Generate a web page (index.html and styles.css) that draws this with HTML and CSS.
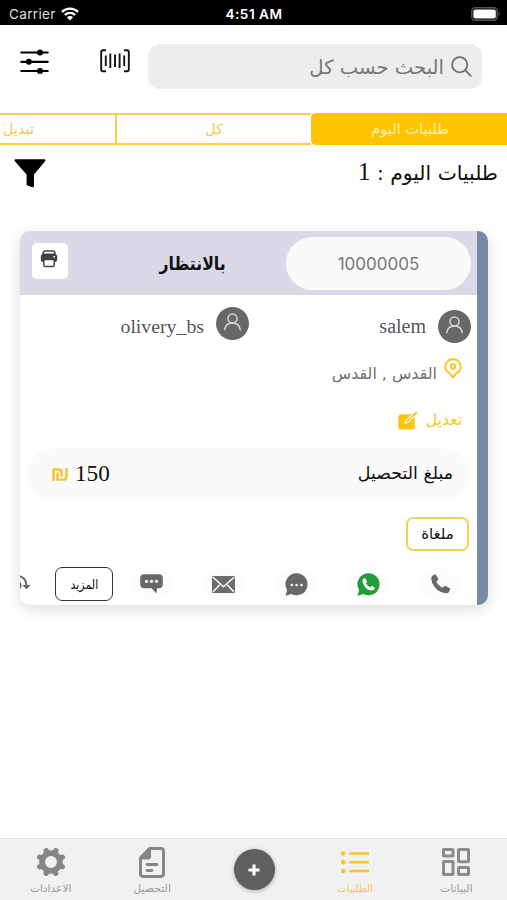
FILE: index.html
```html
<!DOCTYPE html>
<html lang="ar" dir="rtl">
<head>
<meta charset="utf-8">
<title>طلبيات اليوم</title>
<link rel="stylesheet" href="styles.css">
</head>
<body>
<div class="status" dir="ltr">
  <div class="carrier"><span>Carrier</span>
    <svg width="18" height="14" viewBox="0 0 18 14"><g fill="none" stroke="#fff" stroke-width="2.3"><path d="M.9 4.9a11.6 11.6 0 0 1 16.2 0"/><path d="M3.8 8a7.4 7.4 0 0 1 10.4 0"/></g><path d="M5.9 10.2a4.4 4.4 0 0 1 6.2 0L9 13.4z" fill="#fff"/></svg>
  </div>
  <div class="clock">4:51 AM</div>
  <div class="battery"><svg width="30" height="14" viewBox="0 0 30 14"><rect x=".8" y=".8" width="25.4" height="12.4" rx="3.4" fill="none" stroke="#555" stroke-width="1.5"/><rect x="2.4" y="2.4" width="22.4" height="9.2" rx="2" fill="#fff"/><path d="M27.6 4.8q2 2.2 0 4.4z" fill="#666"/></svg></div>
</div>

<header class="top">
  <div class="search">
    <svg width="21" height="21" viewBox="0 0 21 21" fill="none" stroke="#6d6d6d" stroke-width="1.8" stroke-linecap="round"><circle cx="8.7" cy="8.7" r="7.6"/><path d="m14.3 14.3 5.5 5.5"/></svg>
    <span class="t t-search">البحث حسب كل</span>
  </div>
  <svg class="barcode" width="30" height="24" viewBox="0 0 30 24" fill="none" stroke="#111" stroke-width="1.9"><path d="M6 1.2H3Q1.2 1.2 1.2 3V20.500q0 1.8 1.800 1.800H6M24 1.200h3q1.800 0 1.800 1.800V20.500q0 1.800-1.800 1.800H24M5.800 6.500v10.500M10.300 4.500v14.500M15 5.500v12.500M19.600 4.500v14.500M24.200 6.500v10.500"/></svg>
  <svg class="sliders" width="29" height="25" viewBox="0 0 29 25" stroke="#000" stroke-width="2.2" stroke-linecap="round"><path d="M1.300 3.500h26.400M1.300 12.800h26.400M1.300 22h26.400"/><g stroke="none"><circle cx="20" cy="3.500" r="3"/><circle cx="8.800" cy="12.800" r="3"/><circle cx="20" cy="22" r="3"/></g></svg>
</header>

<nav class="segments">
  <div class="seg active"><span class="t">طلبيات اليوم</span></div>
  <div class="seg"><span class="t">كل</span></div>
  <div class="seg last"><span class="t">تبديل</span></div>
</nav>

<div class="heading">
  <h1 class="t">طلبيات اليوم : <span class="serif">1</span></h1>
  <svg width="32" height="29" viewBox="0 0 32 29"><path d="M1.500 .3h29q1.300 0 .8 1.500l-.8 1.300L20 15.500V26.700q0 2-1.800 1.500l-4.800-1.600q-.8-.3-.8-1.100V15.500L1.500 3.100.5 1.800Q0 .3 1.500.3z"/></svg>
</div>

<article class="card">
  <div class="card-head">
    <div class="order">10000005</div>
    <div class="state"><span class="t">بالانتظار</span></div>
    <div class="print"><svg width="18" height="18" viewBox="0 0 18 18"><path d="M4.700 1h8.600q1 0 1.300 1l.5 2.300H2.900L3.400 2q.3-1 1.300-1z" fill="none" stroke="#453f44" stroke-width="1.500"/><path d="M2.600 4.600h12.800q1.800 0 1.800 1.800v3.700q0 1.800-1.800 1.800H2.600Q.8 11.900.8 10.100V6.400q0-1.800 1.800-1.800z" fill="#453f44"/><path d="M3.800 9.400h10.400v5.600q0 1.600-1.600 1.600H5.400q-1.600 0-1.600-1.600z" fill="#fff" stroke="#453f44" stroke-width="1.500"/><circle cx="14.200" cy="6.700" r=".9" fill="#fff"/></svg></div>
  </div>
  <div class="people">
    <div class="person first"><svg class="avatar" width="33" height="33" viewBox="0 0 33 33"><circle cx="16.500" cy="16.500" r="16.500" fill="#686868"/><g fill="none" stroke="#d6d6d6" stroke-width="1.500" stroke-linecap="round"><circle cx="16.500" cy="11.500" r="4.500"/><path d="M8.700 22.700q1-6.700 7.800-6.700t7.800 6.700"/></g></svg><span class="name" dir="ltr">salem</span></div>
    <div class="person second"><svg class="avatar" width="33" height="33" viewBox="0 0 33 33"><circle cx="16.500" cy="16.500" r="16.500" fill="#686868"/><g fill="none" stroke="#d6d6d6" stroke-width="1.500" stroke-linecap="round"><circle cx="16.500" cy="11.500" r="4.500"/><path d="M8.700 22.700q1-6.700 7.800-6.700t7.800 6.700"/></g></svg><span class="name" dir="ltr">olivery_bs</span></div>
  </div>
  <div class="place">
    <svg width="18" height="21" viewBox="0 0 18 21" fill="none" stroke="#fbc517" stroke-width="1.900"><path d="M9 19.300 5.700 15.400Q1.200 12.600 1.200 8.700a7.800 7.500 0 0 1 15.600 0q0 3.900-4.500 6.700z"/><circle cx="9" cy="8.500" r="2.200"/></svg>
    <span class="t">القدس , القدس</span>
  </div>
  <div class="edit">
    <span class="t">تعديل</span>
    <svg width="20" height="19" viewBox="0 0 20 19"><rect x=".3" y="3.300" width="16.400" height="15.200" rx="2.300" fill="#fdc40a"/><path d="m7 12.300 1-3L17.300 1l1.500 1.400-8.500 8.700z" fill="#fdc40a" stroke="#fff" stroke-width="1.200"/><path d="m14 4 4.400-3.600 1.300 1.200-3.900 4z" fill="#fdc40a"/></svg>
  </div>
  <div class="amount">
    <span class="t">مبلغ التحصيل</span>
    <div class="sum" dir="ltr"><svg width="16" height="13" viewBox="0 0 17 14" fill="none" stroke="#efc62d" stroke-width="2.600"><path d="M1.500 14V1.500H7q3.200 0 3.200 3V9.500M5.800 4.800v7.700H12q3.500 0 3.500-3.300V0"/></svg><span>150</span></div>
  </div>
  <div class="tags"><span class="tag"><span class="t">ملغاة</span></span></div>
  <div class="actions">
    <div class="act"><i class="halo"><svg width="20" height="20" viewBox="0 0 20 20"><path d="M1.200 1.900 3.500.6q1-.5 1.600.5l2 3.500q.5 1-.4 1.700L5.300 7.500q1.700 4 6.300 6.300l1.500-1.500q.8-.8 1.700-.3l3.900 2.200q.9.600.4 1.600l-1.300 2.500q-.6 1.100-2 1Q8 18.800 3.600 13 .3 8.600.2 4q0-1.400 1-2.100z" fill="#686868"/></svg></i></div>
    <div class="act"><i class="halo"><svg width="23" height="23" viewBox="0 0 23 23"><path d="M11.700.3A11 11 0 1 1 6.400 21L.5 22.700 2.100 17A11 11 0 0 1 11.700.3z" fill="#219e3a"/><path d="m5.700 6.500 1.500-1.200q.6-.4 1.100.2l1.600 2.700q.3.600-.2 1.100l-.8.900q1.500 2.700 4.300 4l1.200-1q.6-.4 1.200 0l2 1.400q.6.500.2 1.100-1.300 2-3.300 1.800-7.300-.8-9-9-.1-1.200.2-2z" fill="#fff"/></svg></i></div>
    <div class="act"><i class="halo"><svg width="23" height="23" viewBox="0 0 23 23"><path d="M11.700.3A11 11 0 1 1 6.400 21L.5 22.700 2.100 17A11 11 0 0 1 11.700.3z" fill="#686868"/><g fill="#fff"><circle cx="6.800" cy="12" r="1.300"/><circle cx="11.600" cy="12" r="1.300"/><circle cx="16.400" cy="12" r="1.300"/></g></svg></i></div>
    <div class="act"><i class="halo"><svg width="23" height="17" viewBox="0 0 23 17"><rect width="23" height="17" rx="1.500" fill="#6c6c6c"/><path d="m1 1.300 10.500 9.400L22 1.300M1.200 15.700l6.600-7M21.800 15.700l-6.600-7" fill="none" stroke="#fff" stroke-width="1.400"/></svg></i></div>
    <div class="act"><i class="halo"><svg width="23" height="20" viewBox="0 0 23 20"><path d="M4.200.2h14.600q4 0 4 4v6q0 4-4 4H17l-.5 5.300-5-5.300H4.200q-4 0-4-4v-6q0-4 4-4z" fill="#686868"/><g fill="#fff"><circle cx="6.500" cy="7.300" r="1.600"/><circle cx="11.500" cy="7.300" r="1.600"/><circle cx="16.500" cy="7.300" r="1.600"/></g></svg></i></div>
    <div class="more"><span class="t">المزيد</span></div>
    <div class="swap"><svg width="12" height="20" viewBox="0 0 12 20" fill="none" stroke="#686868" stroke-width="2"><path d="M0 2Q7.500 3.500 7.500 12.500"/><path d="m3.500 11 4 4.500 4-4.500z" fill="#686868" stroke="none"/><path d="M0 7.500q3.500 4-.5 8"/></svg></div>
  </div>
</article>

<footer class="tabs">
  <div class="tab"><svg width="28" height="28" viewBox="0 0 28 28" fill="none" stroke="#8b8b8b" stroke-width="3"><rect x="1.500" y="1.500" width="9.500" height="6.500" rx=".5"/><rect x="16.500" y="1.500" width="10" height="12.300" rx=".5"/><rect x="1.500" y="13.500" width="9.500" height="13" rx=".5"/><rect x="16.500" y="19.500" width="10" height="7" rx=".5"/></svg><span class="t n1">البيانات</span></div>
  <div class="tab on"><svg width="28" height="28" viewBox="0 0 28 28" fill="none" stroke="#f5c525" stroke-width="2.600" stroke-linecap="round"><path d="M9.500 5.500h17.500M9.500 14.300h17.500M9.500 23h17.500"/><g fill="#f5c525" stroke="none"><circle cx="2.200" cy="5.500" r="2.200"/><circle cx="2.200" cy="14.300" r="2.200"/><circle cx="2.200" cy="23" r="2.200"/></g></svg><span class="t n2">الطلبيات</span></div>
  <div class="tab"><div class="add"><svg width="12" height="12" viewBox="0 0 12 12" stroke="#fff" stroke-width="3"><path d="M6 .5v11M.5 6h11"/></svg></div></div>
  <div class="tab"><svg class="doc" width="26" height="31" viewBox="0 0 26 30" preserveAspectRatio="none" fill="none" stroke="#858585" stroke-width="2.900" stroke-linejoin="round" stroke-linecap="round"><path d="M10.500 1.500H22q2.500 0 2.500 2.500v22q0 2.500-2.500 2.500H4q-2.500 0-2.500-2.500V10.500z"/><path d="M1.500 11.500 11.500 1.500V9q0 2.500-2.500 2.500z" fill="#858585" stroke-width="1"/><path d="M8 17h10M8 22.800h5"/></svg><span class="t n3">التحصيل</span></div>
  <div class="tab"><svg width="28" height="28" viewBox="0 0 28 28"><circle cx="14" cy="14" r="8.900" fill="none" stroke="#868686" stroke-width="5.800"/><path d="M9.600 3.300 9.200 2.600M18.400 3.300l.4-.7M24.700 9.600l.7-.4M24.700 18.400l.7.400M18.400 24.700l.4.700M9.600 24.700l-.4.700M3.300 18.400l-.7.400M3.300 9.600l-.7-.4" stroke="#868686" stroke-width="5.200" stroke-linecap="round"/></svg><span class="t n4">الاعدادات</span></div>
</footer>
</body>
</html>
```
FILE: styles.css
```css
* { box-sizing: border-box; }
html, body { height: 100%; }
body {
  margin: 0;
  height: 900px;
  overflow: hidden;
  display: flex;
  flex-direction: column;
  background: #fff;
  color: #111;
  font-family: "DejaVu Sans", sans-serif;
}
svg { display: block; flex: none; }
.t { white-space: nowrap; display: block; }

.status {
  height: 25px;
  flex: none;
  background: #000;
  color: #fff;
  display: grid;
  grid-template-columns: 1fr auto 1fr;
  align-items: center;
  padding: 2px 6px 0 9px;
  font-family: Inter, sans-serif;
  font-size: 13.6px;
}
.carrier { display: flex; align-items: center; gap: 5px; color: #dedede; letter-spacing: .3px; }
.clock { font-weight: 600; font-size: 13.6px; letter-spacing: .5px; margin-right: 2px; }
.battery { display: flex; justify-content: flex-end; }

.top { height: 88px; flex: none; display: flex; align-items: flex-start; padding: 19px 25px 0 0; }
.search {
  width: 334px;
  height: 45px;
  border-radius: 12px;
  background: #ededed;
  color: #777;
  display: flex;
  align-items: center;
  padding-right: 10px;
  gap: 7px;
}
.t-search { font-size: 19.6px; padding-top: 1px; }
.barcode { margin: 5px 18px 0 0; }
.sliders { margin: 5px 51px 0 0; }

.segments { height: 32px; flex: none; display: flex; overflow: hidden; }
.seg {
  width: 196px;
  flex: none;
  border: solid #f9ce4b;
  border-width: 2px 0 2px 2px;
  color: #ebca58;
  display: flex;
  align-items: center;
  justify-content: center;
  padding-bottom: 2px;
  font-size: 14.6px;
}
.seg.active { background: #ffc400; border-color: #ffc400; color: #fff0b8; border-radius: 5px 0 0 5px; }
.seg.last { width: 115px; border-left: 0; justify-content: flex-start; padding-right: 81px; }

.heading { height: 86px; flex: none; display: flex; justify-content: space-between; padding: 14px 9px 0 14px; }
.heading h1 { margin: -3px 0 0; font-size: 20.3px; font-weight: 400; line-height: 32px; }
.serif { font-family: "Liberation Serif", serif; font-size: 25px; }

.card {
  width: 468px;
  height: 374px;
  flex: none;
  margin-right: 19px;
  border-right: 11px solid #7889a6;
  border-radius: 10px;
  box-shadow: 0 4px 15px rgba(0, 0, 0, .14);
  overflow: hidden;
  background: #fff;
}
.card-head { height: 64px; background: #dbd8e8; display: flex; align-items: flex-start; padding: 6px 6px 0 12px; }
.order {
  width: 185px;
  height: 53px;
  border-radius: 27px;
  background: #fafafa;
  color: #777;
  font: 17px/54px Inter, sans-serif;
  text-align: center;
}
.state { flex: 1; padding: 13px 60px 0 0; font-size: 18px; font-weight: 700; line-height: 28px; }
.state .t { width: max-content; transform: scaleX(.875); transform-origin: right; }
.print { width: 36px; height: 36px; margin-top: 6px; border-radius: 5px; background: #fff; display: grid; place-items: center; padding: 0 2px 4px 0; }

.people { height: 57px; display: flex; padding-right: 6px; }
.person { display: flex; gap: 12px; font: 20px/33px "Liberation Serif", serif; color: #55565b; }
.first { width: 222px; padding-top: 15px; }
.second { padding-top: 12px; }
.second .name { padding-top: 3px; font-size: 19.8px; }
.place { height: 46px; display: flex; padding: 6px 15px 0 0; gap: 7px; font-size: 15.9px; color: #707070; line-height: 32px; }
.edit { height: 50px; display: flex; padding: 13px 15px 0 0; gap: 8px; font-size: 15.6px; color: #fdc71c; line-height: 19px; }
.amount {
  height: 52px;
  margin: 0 8px 0 7px;
  border-radius: 26px;
  background: #fafafa;
  display: flex;
  justify-content: space-between;
  align-items: center;
  padding: 0 16px 2px 25px;
  font-size: 17.4px;
}
.sum { display: flex; align-items: center; gap: 7px; font: 23.2px/40px "Liberation Serif", serif; }
.sum svg { margin-top: 2px; }
.tags { padding: 17px 8px 0 0; height: 66px; }
.tag { width: 63px; height: 34px; border: 2px solid #f5d05b; border-radius: 7px; display: grid; place-items: center; font-size: 15px; }
.actions { display: flex; align-items: center; height: 36px; overflow: hidden; }
.act { width: 72.4px; flex: none; display: grid; place-items: center; }
.halo { width: 40px; height: 34px; border-radius: 50%; background: #fcfcfc; display: grid; place-items: center; }
.more { width: 58px; height: 34px; flex: none; margin-right: 2px; border: 1.5px solid #333; border-radius: 7px; display: grid; place-items: center; font-size: 13px; }
.more .t { transform: scaleX(.85); }
.swap { margin-right: 24px; }

.tabs { margin-top: auto; height: 62px; flex: none; border-top: 1px solid #e3e3e3; background: #f2f1f2; display: flex; }
.tab { flex: 1; display: flex; flex-direction: column; align-items: center; justify-content: space-between; padding: 9px 0 3px; color: #999; line-height: 17px; }
.tab.on { color: #efcb55; }
.n1, .n3 { font-size: 10.900px; }
.n2 { font-size: 10px; }
.n4 { font-size: 10.600px; }
.doc { margin-top: -1px; }
.add { width: 41px; height: 41px; border-radius: 50%; margin: 1px -2px 0 0; background: #5f5f5f; display: grid; place-items: center; box-shadow: 0 1px 4px rgba(0, 0, 0, .3); }
```
